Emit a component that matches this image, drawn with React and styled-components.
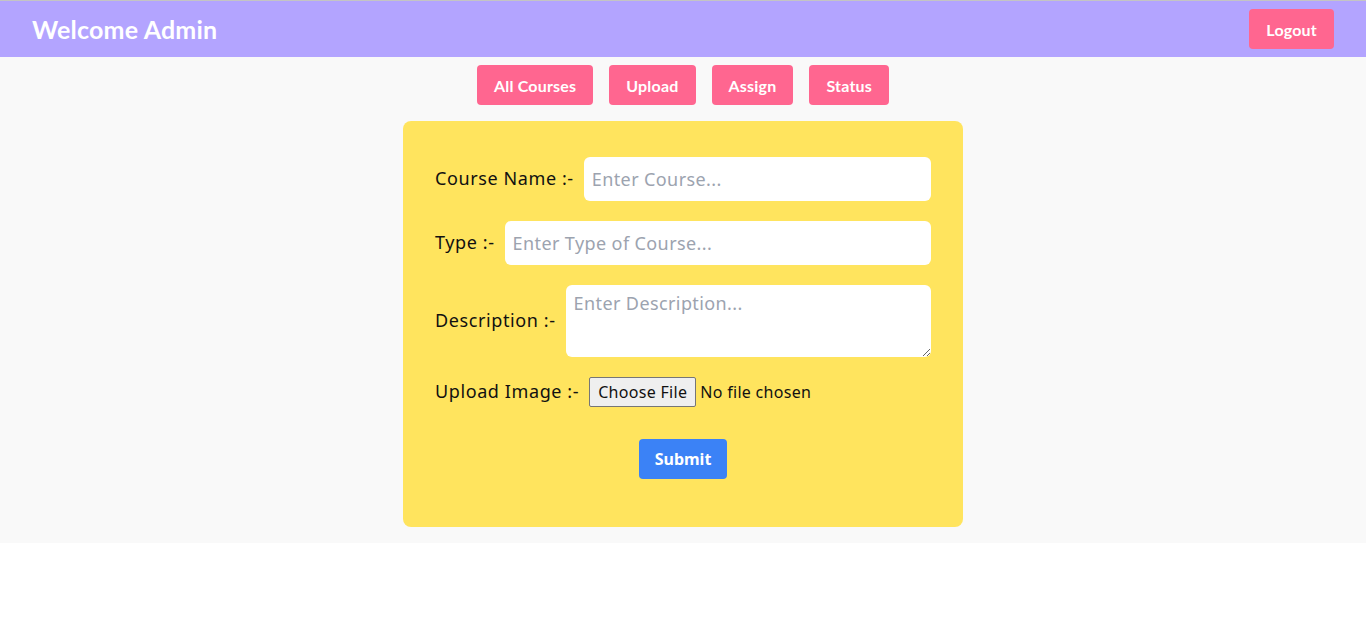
import React from 'react'
import styled, { createGlobalStyle } from 'styled-components'

const GlobalStyle = createGlobalStyle`
    body {
        margin: 0;
        background: #ffffff;
        font-family: "Noto Sans", sans-serif;
    }
`

function App() {
    return (
        <>
            <GlobalStyle />
            <TopLine />
            <Header>
                <Title>Welcome Admin</Title>
                <PinkButton>Logout</PinkButton>
            </Header>
            <Page>
                <Nav>
                    <PinkButton>All Courses</PinkButton>
                    <PinkButton>Upload</PinkButton>
                    <PinkButton>Assign</PinkButton>
                    <PinkButton>Status</PinkButton>
                </Nav>
                <Card>
                    <Row>
                        <Label>Course Name :-</Label>
                        <Input placeholder="Enter Course..." />
                    </Row>
                    <Row>
                        <Label>Type :-</Label>
                        <Input placeholder="Enter Type of Course..." />
                    </Row>
                    <Row>
                        <Label>Description :-</Label>
                        <TextArea placeholder="Enter Description..." />
                    </Row>
                    <Row>
                        <Label>Upload Image :-</Label>
                        <FileInput type="file" />
                    </Row>
                    <SubmitWrap>
                        <Submit>Submit</Submit>
                    </SubmitWrap>
                </Card>
            </Page>
        </>
    )
}

export default App

const TopLine = styled.div`
    height: 1px;
    background: #c4c4c4;
`

const Header = styled.header`
    height: 56px;
    background: #b3a4ff;
    display: flex;
    align-items: center;
    justify-content: space-between;
    padding: 0 32px;
`

const Title = styled.h1`
    margin: 0;
    color: #ffffff;
    font-family: Lato, sans-serif;
    font-weight: 700;
    font-size: 25px;
    letter-spacing: 0.2px;
`

const PinkButton = styled.button`
    height: 40px;
    padding: 0 17px;
    border: none;
    border-radius: 4px;
    background: #ff6690;
    color: #ffffff;
    font-family: Lato, sans-serif;
    font-weight: 700;
    font-size: 16px;
    letter-spacing: 0.2px;
    cursor: pointer;
`

const Page = styled.main`
    background: #f9f9f9;
    padding: 8px 0 16px;
    display: flex;
    flex-direction: column;
    align-items: center;
`

const Nav = styled.nav`
    display: flex;
    gap: 16px;
    margin-bottom: 16px;
`

const Card = styled.form`
    width: 560px;
    box-sizing: border-box;
    background: #ffe45e;
    border-radius: 8px;
    padding: 36px 32px 48px;
    display: flex;
    flex-direction: column;
    gap: 20px;
`

const Row = styled.div`
    display: flex;
    align-items: center;
    gap: 10px;
`

const Label = styled.label`
    font-family: "Noto Sans", sans-serif;
    font-size: 18px;
    letter-spacing: 0.6px;
    color: #111111;
    white-space: nowrap;
    margin-top: -3px;
`

const Input = styled.input`
    flex: 1;
    height: 44px;
    box-sizing: border-box;
    border: none;
    border-radius: 6px;
    padding: 0 8px;
    font-family: "Noto Sans", sans-serif;
    font-size: 18px;
    letter-spacing: 0.4px;
    background: #ffffff;
    outline: none;

    &::placeholder {
        color: #9ca3af;
    }
`

const TextArea = styled.textarea`
    flex: 1;
    height: 72px;
    box-sizing: border-box;
    border: none;
    border-radius: 6px;
    padding: 6px 8px;
    font-family: "Noto Sans", sans-serif;
    font-size: 18px;
    letter-spacing: 0.4px;
    background: #ffffff;
    outline: none;

    &::placeholder {
        color: #9ca3af;
    }
`

const FileInput = styled.input`
    font-family: "Noto Sans", sans-serif;
    font-size: 16px;
    letter-spacing: 0.3px;
    color: #111111;

    &::file-selector-button {
        height: 30px;
        margin-right: 4px;
        padding: 0 8px;
        border: 1px solid #767676;
        border-radius: 2px;
        background: #efefef;
        font-family: "Noto Sans", sans-serif;
        font-size: 16px;
        letter-spacing: 0.3px;
        color: #111111;
    }
`

const SubmitWrap = styled.div`
    display: flex;
    justify-content: center;
    margin-top: 12px;
`

const Submit = styled.button`
    height: 40px;
    padding: 0 16px;
    border: none;
    border-radius: 4px;
    background: #3b82f6;
    color: #ffffff;
    font-family: "Noto Sans", sans-serif;
    font-weight: 700;
    font-size: 16px;
    cursor: pointer;
`
